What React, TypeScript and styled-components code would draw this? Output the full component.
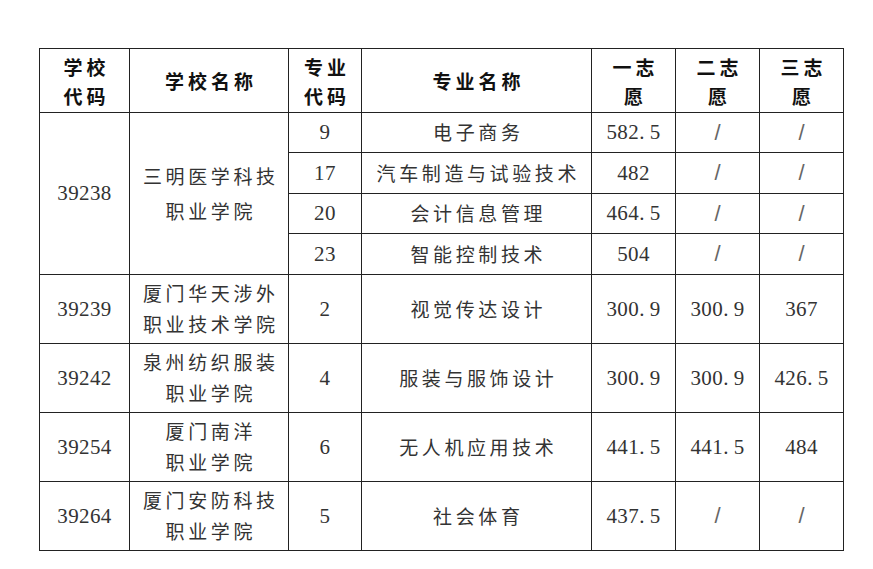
import React from "react";
import styled, { createGlobalStyle } from "styled-components";

const Global = createGlobalStyle`
  html, body { margin: 0; padding: 0; background: #ffffff; }
  #root { width: 873px; height: 569px; }
`;

const Page = styled.div`
  width: 873px;
  height: 569px;
  box-sizing: border-box;
  padding: 48px 0 0 39px;
  background: #fff;
`;

const Table = styled.table`
  border-collapse: collapse;
  table-layout: fixed;
  width: 804px;
  font-family: "Liberation Serif", "Noto Sans CJK SC", serif;
  color: #333;
`;

const HeadCell = styled.th`
  border: 1.2px solid #222;
  padding: 0;
  text-align: center;
  vertical-align: middle;
  font-family: "Noto Sans CJK SC", sans-serif;
  font-weight: 700;
  font-size: 19px;
  line-height: 29px;
  color: #111;
`;

const Cell = styled.td<{ $lh?: number }>`
  border: 1.2px solid #222;
  padding: 0;
  text-align: center;
  vertical-align: middle;
  font-size: 21px;
  line-height: ${(p) => p.$lh ?? 29}px;
  color: #333;
`;

const Row = styled.tr<{ $h: number }>`
  height: ${(p) => p.$h}px;
`;

const Cn = styled.span<{ $sp?: number }>`
  font-family: "Noto Sans CJK SC", sans-serif;
  font-size: 19px;
  letter-spacing: ${(p) => p.$sp ?? 3.6}px;
  margin-right: -${(p) => p.$sp ?? 3.6}px;
`;

const Num = styled.span`
  letter-spacing: 0.4px;
`;

const Dot = styled.span`
  display: inline-block;
  width: 0.5em;
  text-align: left;
`;

const Slash = styled.span`
  font-family: "Liberation Sans", sans-serif;
  font-size: 22px;
  color: #666;
  display: inline-block;
`;

const Score = ({ v }: { v: string }) => {
  if (v === "/") return <Slash>/</Slash>;
  const [a, b] = v.split(".");
  return (
    <Num>
      {a}
      {b !== undefined && (
        <>
          <Dot>.</Dot>
          {b}
        </>
      )}
    </Num>
  );
};

const Lines = ({ text, sp }: { text: string; sp?: number }) => (
  <>
    {text.split("|").map((t, i) => (
      <div key={i}>
        <Cn $sp={sp}>{t}</Cn>
      </div>
    ))}
  </>
);

type Major = { code: string; name: string; s1: string; s2: string; s3: string };
type School = { code: string; name: string; majors: Major[] };

const schools: School[] = [
  {
    code: "39238",
    name: "三明医学科技|职业学院",
    majors: [
      { code: "9", name: "电子商务", s1: "582.5", s2: "/", s3: "/" },
      { code: "17", name: "汽车制造与试验技术", s1: "482", s2: "/", s3: "/" },
      { code: "20", name: "会计信息管理", s1: "464.5", s2: "/", s3: "/" },
      { code: "23", name: "智能控制技术", s1: "504", s2: "/", s3: "/" },
    ],
  },
  {
    code: "39239",
    name: "厦门华天涉外|职业技术学院",
    majors: [{ code: "2", name: "视觉传达设计", s1: "300.9", s2: "300.9", s3: "367" }],
  },
  {
    code: "39242",
    name: "泉州纺织服装|职业学院",
    majors: [{ code: "4", name: "服装与服饰设计", s1: "300.9", s2: "300.9", s3: "426.5" }],
  },
  {
    code: "39254",
    name: "厦门南洋|职业学院",
    majors: [{ code: "6", name: "无人机应用技术", s1: "441.5", s2: "441.5", s3: "484" }],
  },
  {
    code: "39264",
    name: "厦门安防科技|职业学院",
    majors: [{ code: "5", name: "社会体育", s1: "437.5", s2: "/", s3: "/" }],
  },
];

const multiHeights = [40, 41, 40, 41];

export default function App() {
  return (
    <>
      <Global />
      <Page>
        <Table>
          <colgroup>
            <col style={{ width: 90 }} />
            <col style={{ width: 159 }} />
            <col style={{ width: 73 }} />
            <col style={{ width: 230 }} />
            <col style={{ width: 84 }} />
            <col style={{ width: 84 }} />
            <col style={{ width: 84 }} />
          </colgroup>
          <thead>
            <Row $h={64}>
              <HeadCell><Lines text="学校|代码" sp={4} /></HeadCell>
              <HeadCell><Lines text="学校名称" sp={4} /></HeadCell>
              <HeadCell><Lines text="专业|代码" sp={4} /></HeadCell>
              <HeadCell><Lines text="专业名称" sp={4} /></HeadCell>
              <HeadCell><Lines text="一志|愿" sp={4} /></HeadCell>
              <HeadCell><Lines text="二志|愿" sp={4} /></HeadCell>
              <HeadCell><Lines text="三志|愿" sp={4} /></HeadCell>
            </Row>
          </thead>
          <tbody>
            {schools.map((s) =>
              s.majors.map((m, i) => (
                <Row
                  key={s.code + m.code}
                  $h={s.majors.length > 1 ? multiHeights[i] : 69}
                >
                  {i === 0 && (
                    <>
                      <Cell rowSpan={s.majors.length}>
                        <Num>{s.code}</Num>
                      </Cell>
                      <Cell rowSpan={s.majors.length} $lh={s.majors.length > 1 ? 33 : 29}>
                        <Lines text={s.name} />
                      </Cell>
                    </>
                  )}
                  <Cell><Num>{m.code}</Num></Cell>
                  <Cell><Cn>{m.name}</Cn></Cell>
                  <Cell><Score v={m.s1} /></Cell>
                  <Cell><Score v={m.s2} /></Cell>
                  <Cell><Score v={m.s3} /></Cell>
                </Row>
              ))
            )}
          </tbody>
        </Table>
      </Page>
    </>
  );
}
